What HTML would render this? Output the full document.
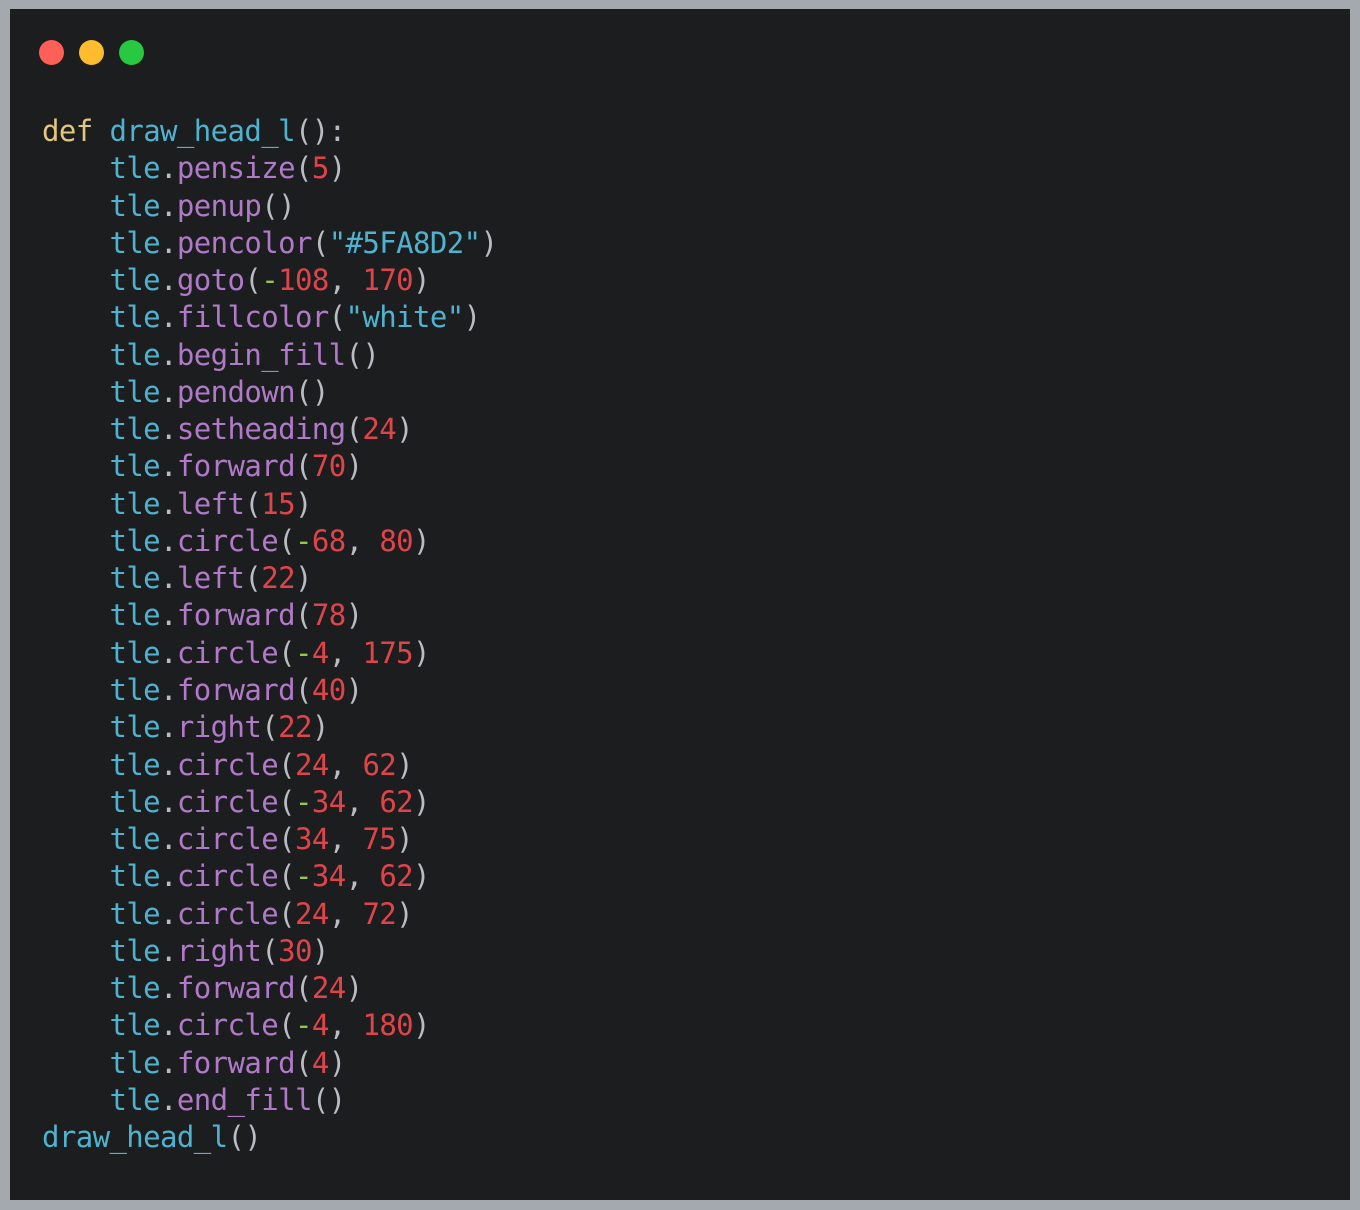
<!DOCTYPE html>
<html><head><meta charset="utf-8"><style>
html,body{margin:0;padding:0}
body{width:1360px;height:1210px;background:#a4a9af;position:relative;overflow:hidden}
.win{position:absolute;left:10px;top:9px;width:1340px;height:1191px;background:#1c1d1f}
.dot{position:absolute;top:31px;width:25px;height:25px;border-radius:50%}
pre{position:absolute;left:32px;top:104px;margin:0;font-family:"DejaVu Sans Mono","Liberation Mono",monospace;font-size:29px;letter-spacing:-0.6px;line-height:37.26px;color:#b9bcc2}
.k{color:#e3c77c}.f{color:#4fb3cf}.m{color:#b07ac8}.n{color:#e0444b}.o{color:#96c455}.s{color:#4fb3cf}
</style></head><body><div class="win">
<div class="dot" style="left:29px;background:#fe5f57"></div>
<div class="dot" style="left:69px;background:#febc2e"></div>
<div class="dot" style="left:109px;background:#28c840"></div>
<pre><span class="k">def</span> <span class="f">draw_head_l</span>():
    <span class="f">tle</span>.<span class="m">pensize</span>(<span class="n">5</span>)
    <span class="f">tle</span>.<span class="m">penup</span>()
    <span class="f">tle</span>.<span class="m">pencolor</span>(<span class="s">"#5FA8D2"</span>)
    <span class="f">tle</span>.<span class="m">goto</span>(<span class="o">-</span><span class="n">108</span>, <span class="n">170</span>)
    <span class="f">tle</span>.<span class="m">fillcolor</span>(<span class="s">"white"</span>)
    <span class="f">tle</span>.<span class="m">begin_fill</span>()
    <span class="f">tle</span>.<span class="m">pendown</span>()
    <span class="f">tle</span>.<span class="m">setheading</span>(<span class="n">24</span>)
    <span class="f">tle</span>.<span class="m">forward</span>(<span class="n">70</span>)
    <span class="f">tle</span>.<span class="m">left</span>(<span class="n">15</span>)
    <span class="f">tle</span>.<span class="m">circle</span>(<span class="o">-</span><span class="n">68</span>, <span class="n">80</span>)
    <span class="f">tle</span>.<span class="m">left</span>(<span class="n">22</span>)
    <span class="f">tle</span>.<span class="m">forward</span>(<span class="n">78</span>)
    <span class="f">tle</span>.<span class="m">circle</span>(<span class="o">-</span><span class="n">4</span>, <span class="n">175</span>)
    <span class="f">tle</span>.<span class="m">forward</span>(<span class="n">40</span>)
    <span class="f">tle</span>.<span class="m">right</span>(<span class="n">22</span>)
    <span class="f">tle</span>.<span class="m">circle</span>(<span class="n">24</span>, <span class="n">62</span>)
    <span class="f">tle</span>.<span class="m">circle</span>(<span class="o">-</span><span class="n">34</span>, <span class="n">62</span>)
    <span class="f">tle</span>.<span class="m">circle</span>(<span class="n">34</span>, <span class="n">75</span>)
    <span class="f">tle</span>.<span class="m">circle</span>(<span class="o">-</span><span class="n">34</span>, <span class="n">62</span>)
    <span class="f">tle</span>.<span class="m">circle</span>(<span class="n">24</span>, <span class="n">72</span>)
    <span class="f">tle</span>.<span class="m">right</span>(<span class="n">30</span>)
    <span class="f">tle</span>.<span class="m">forward</span>(<span class="n">24</span>)
    <span class="f">tle</span>.<span class="m">circle</span>(<span class="o">-</span><span class="n">4</span>, <span class="n">180</span>)
    <span class="f">tle</span>.<span class="m">forward</span>(<span class="n">4</span>)
    <span class="f">tle</span>.<span class="m">end_fill</span>()
<span class="f">draw_head_l</span>()</pre>
</div></body></html>
